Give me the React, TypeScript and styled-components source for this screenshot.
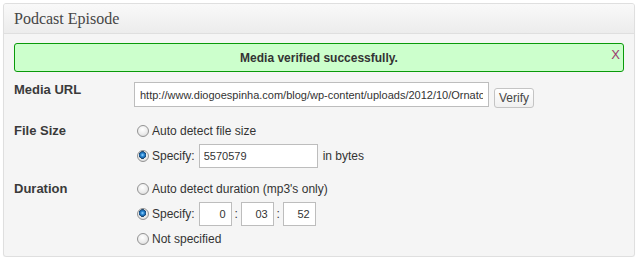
import * as React from 'react';

import styled, { createGlobalStyle } from 'styled-components';

const GlobalStyle = createGlobalStyle`
    body {
        margin: 0;
        background: #ffffff;
        font-family: "Liberation Sans", Arial, sans-serif;
    }
`;

const Page = styled.div`
    padding: 3px 8px 0 3px;
`;

const Box = styled.div`
    border: 1px solid #dfdfdf;
    border-radius: 3px;
    background: #f5f5f5;
    box-shadow: 0 1px 1px rgba(0,0,0,0.04);
    overflow: hidden;
`;

const Header = styled.div`
    height: 29px;
    line-height: 29px;
    padding: 0 10px;

    border-bottom: 1px solid #dfdfdf;
    background: linear-gradient(to bottom, #f9f9f9, #ececec);

    font-family: "Liberation Serif", Georgia, serif;
    font-size: 16px;
    color: #464646;
`;

const Body = styled.div`
    padding: 9px 10px 9px 10px;
`;

const Notice = styled.div`
    position: relative;

    padding: 7px 10px 5px;
    border: 1px solid #0a9a0a;
    border-radius: 3px;
    background: #ccffcc;

    text-align: center;
    font-size: 12px;
    line-height: 15px;
    font-weight: bold;
    color: #333333;
`;

const Dismiss = styled.span`
    position: absolute;
    top: 3px;
    right: 3px;

    font-size: 13px;
    font-weight: normal;
    color: #9b3a6e;
    cursor: pointer;
`;

interface FieldProps {
    gap: number;
}

const Field = styled.div<FieldProps>`
    display: flex;
    align-items: flex-start;
    margin-top: ${(props: FieldProps) => props.gap}px;
`;

const Label = styled.div`
    width: 120px;
    flex-shrink: 0;

    font-size: 13px;
    line-height: 16px;
    font-weight: bold;
    color: #3a3a3a;
`;

const Options = styled.div`
    display: flex;
    flex-direction: column;
    gap: 5px;
`;

const Line = styled.div`
    display: flex;
    align-items: center;
    min-height: 16px;

    font-size: 12px;
    line-height: 16px;
    color: #333333;
`;

const Radio = styled.input.attrs({ type: 'radio' })`
    appearance: none;
    width: 12px;
    height: 12px;
    margin: 0 3px 0 3px;
    border: 1px solid #939393;
    border-radius: 50%;
    background: radial-gradient(circle at 45% 35%, #ffffff 0%, #ececec 55%, #cfcfcf 100%);

    &:checked {
        background:
            radial-gradient(circle at 45% 40%, #a6dcff 0px, #2f8fdc 1.5px, #1a5c99 3px, #173f66 3.6px, transparent 4px),
            radial-gradient(circle at 45% 35%, #ffffff 0%, #ececec 55%, #cfcfcf 100%);
    }
`;

interface TextBoxProps {
    width: number;
    align?: string;
}

const TextBox = styled.input<TextBoxProps>`
    box-sizing: border-box;
    width: ${(props: TextBoxProps) => props.width}px;
    height: 24px;
    margin: 0;
    padding: 0 5px 0 4px;

    border: 1px solid #bdbdbd;
    background: #ffffff;

    font-family: "Liberation Sans", Arial, sans-serif;
    font-size: 11px;
    color: #333333;
    text-align: ${(props: TextBoxProps) => props.align || 'left'};
`;

const UrlBox = styled(TextBox)`
    height: 25px;
    padding-left: 5px;
`;

const Gap = styled.span`
    margin-right: 4px;
`;

const Colon = styled.span`
    width: 9px;
    text-align: center;
    font-size: 12px;
`;

const Suffix = styled.span`
    margin-left: 5px;
`;

const VerifyButton = styled.button`
    box-sizing: border-box;
    height: 20px;
    margin: 6px 0 0 5px;
    padding: 0 4px;

    border: 1px solid #c4c4c4;
    border-radius: 3px;
    background: linear-gradient(to bottom, #ffffff, #f0f0f0);

    font-family: "Liberation Sans", Arial, sans-serif;
    font-size: 12px;
    color: #464646;
`;

const Inline = styled.div`
    display: flex;
    align-items: flex-start;
`;

const App: React.FC = () => {

    return (
        <Page>
            <GlobalStyle />
            <Box>

                <Header>Podcast Episode</Header>

                <Body>

                    <Notice>
                        Media verified successfully.
                        <Dismiss>X</Dismiss>
                    </Notice>

                    <Field gap={10}>
                        <Label>Media URL</Label>
                        <Inline>
                            <UrlBox width={355} readOnly
                                value="http://www.diogoespinha.com/blog/wp-content/uploads/2012/10/Ornatos-Violeta-Ouvi-Dizer.mp3" />
                            <VerifyButton>Verify</VerifyButton>
                        </Inline>
                    </Field>

                    <Field gap={15}>
                        <Label>File Size</Label>
                        <Options>
                            <Line><Radio name="size" readOnly />Auto detect file size</Line>
                            <Line>
                                <Radio name="size" defaultChecked />
                                <Gap>Specify:</Gap>
                                <TextBox width={119} readOnly value="5570579" />
                                <Suffix>in bytes</Suffix>
                            </Line>
                        </Options>
                    </Field>

                    <Field gap={13}>
                        <Label>Duration</Label>
                        <Options>
                            <Line><Radio name="duration" />Auto detect duration (mp3's only)</Line>
                            <Line>
                                <Radio name="duration" defaultChecked />
                                <Gap>Specify:</Gap>
                                <TextBox width={33} align="right" readOnly value="0" />
                                <Colon>:</Colon>
                                <TextBox width={33} align="right" readOnly value="03" />
                                <Colon>:</Colon>
                                <TextBox width={33} align="right" readOnly value="52" />
                            </Line>
                            <Line><Radio name="duration" />Not specified</Line>
                        </Options>
                    </Field>

                </Body>

            </Box>
        </Page>
    );

}

export default App;
